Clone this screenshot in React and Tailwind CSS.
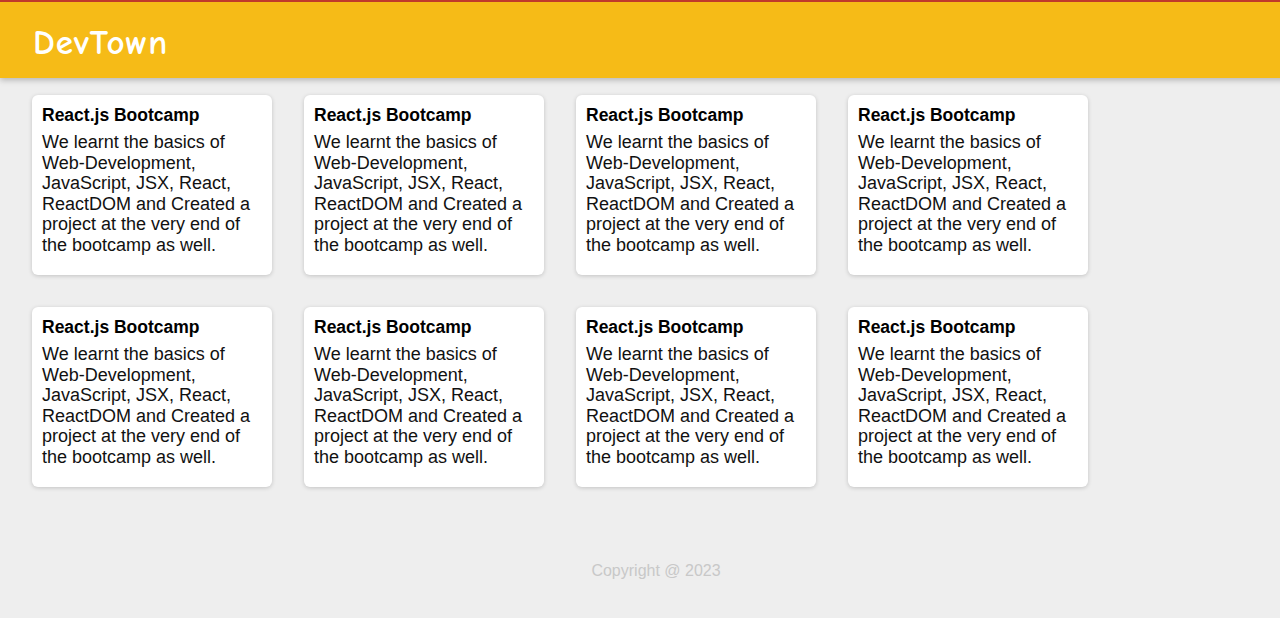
import React from 'react'

const courses = Array.from({ length: 8 }, (_, i) => ({
    id: i,
    title: 'React.js Bootcamp',
    text: 'We learnt the basics of Web-Development, JavaScript, JSX, React, ReactDOM and Created a project at the very end of the bootcamp as well.',
}))

const CourseCard = ({ title, text }) => (
    <div className="bg-white rounded-md shadow-[0_1px_4px_rgba(0,0,0,0.18)] px-[10px] pt-[9px] h-[180px]">
        <h3 className="text-[17.5px] font-bold text-black leading-[22px]">{title}</h3>
        <p className="text-[18px] leading-[20.6px] text-[#111] mt-[6px]">{text}</p>
    </div>
)

const App = () => {
    return (
        <div className="min-w-[1312px] min-h-screen bg-[#eeeeee] font-['Liberation_Sans',Arial,sans-serif]">
            <header className="h-[78px] bg-[#f6bb17] border-t-2 border-[#c0392b] shadow-[0_2px_6px_rgba(0,0,0,0.25)] flex items-center px-[33px]">
                <h1 className="text-white text-[35px] tracking-[1px] font-semibold font-['Comic_Sans_MS','Comic_Neue',cursive] leading-none mt-[5px]">DevTown</h1>
            </header>
            <main className="px-[32px] pt-[17px]">
                <div className="grid grid-cols-[repeat(4,240px)] gap-x-[32px] gap-y-[32px]">
                    {courses.map((c) => (
                        <CourseCard key={c.id} title={c.title} text={c.text} />
                    ))}
                </div>
            </main>
            <footer className="pt-[72px] pb-[24px] text-center text-[16px] text-[#c8c8c8]">
                Copyright @ 2023
            </footer>
        </div>
    )
}

export default App
